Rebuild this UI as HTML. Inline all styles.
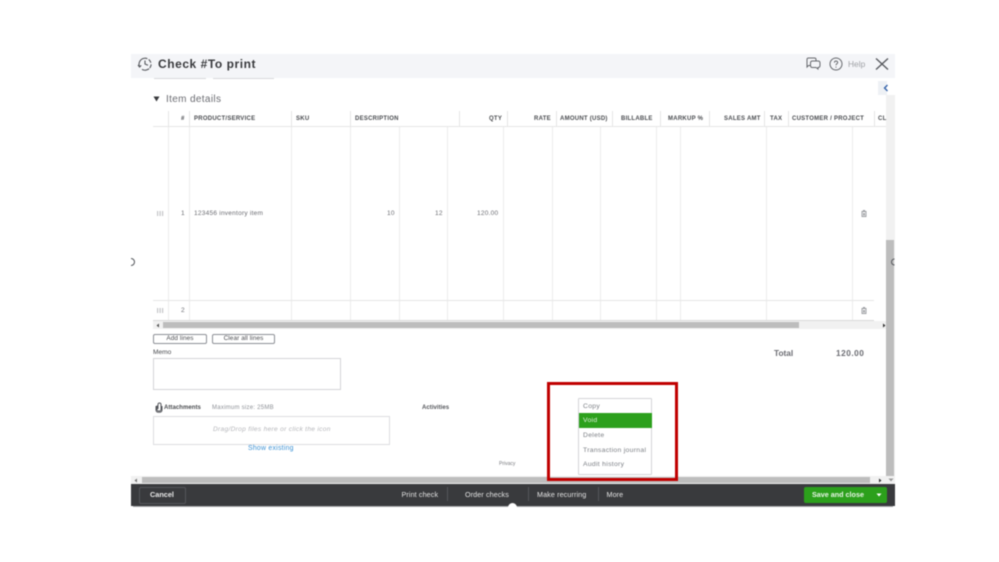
<!DOCTYPE html>
<html><head><meta charset="utf-8"><style>
html,body{margin:0;padding:0;background:#fff}
#p{position:relative;width:999px;height:562px;overflow:hidden;background:#fff;font-family:"Liberation Sans",sans-serif;filter:blur(.5px)}
#p div,#p span.t{position:absolute}
.t{white-space:nowrap;line-height:10px}
.h{font-size:6px;font-weight:bold;color:#4a4c50;top:113.5px;letter-spacing:.25px}
.v{width:1px;background:#ededed}
.vh{width:1px;background:#e6e6e6;top:111px;height:15px}
.c{font-size:6.5px;color:#6b6c72;line-height:10px;white-space:nowrap;letter-spacing:.25px}
.m{font-size:6.8px;color:#7d8086;left:583px;letter-spacing:.3px}
.f{font-size:7.2px;color:#e4e4e4;top:489.5px;letter-spacing:.1px}
.sep{width:1px;background:#55565a;top:487px;height:14px}
.btn{border:1px solid #8d9096;border-radius:2px;background:#fff;box-sizing:border-box;text-align:center;font-size:6.4px;line-height:8px;color:#4a4c50;letter-spacing:.1px}
</style></head><body><div id="p">

<!-- header -->
<div style="left:131px;top:54px;width:764px;height:24px;background:#f4f5f8"></div>
<svg style="position:absolute;left:137px;top:56px" width="16" height="16" viewBox="0 0 16 16" fill="none" stroke="#55575c" stroke-width="1.1"><path d="M2.5 10.5A6 6 0 1 1 5 13.4" stroke-dasharray="14 1.5 4 1.5 4 1"/><path d="M8 4.5V8l3 1.3"/><path d="M1 9l1.6 2L4.2 9.4"/></svg>
<div class="t" style="left:158px;top:57px;font-size:12px;line-height:14px;font-weight:bold;color:#393a3d;letter-spacing:.55px">Check #To print</div>
<div style="left:154px;top:78px;width:52px;height:1px;background:#d8d9dc"></div>
<div style="left:213px;top:78px;width:61px;height:1px;background:#d8d9dc"></div>

<svg style="position:absolute;left:805px;top:56px" width="17" height="15" viewBox="0 0 17 15" fill="none" stroke="#66686d" stroke-width="1"><path d="M5 9.5H3.5L2 11V3.5Q2 2 3.5 2H9.5Q11 2 11 3.5V4.5"/><path d="M7.5 5H13Q15 5 15 7V9.5Q15 11.5 13 11.5V13L11 11.5H7.5Q5.500 11.5 5.500 9.500V7Q5.500 5 7.500 5Z"/></svg>
<svg style="position:absolute;left:829px;top:57px" width="14" height="14" viewBox="0 0 14 14" fill="none" stroke="#66686d" stroke-width="1"><circle cx="7" cy="7" r="6"/><path d="M5.4 5.6Q5.5 4 7 4T8.7 5.5C8.7 6.7 7 6.8 7 8.2"/><path d="M7 9.6v1"/></svg>
<div class="t" style="left:848px;top:59px;font-size:8.4px;color:#a0a2a6">Help</div>
<svg style="position:absolute;left:875px;top:57px" width="14" height="14" viewBox="0 0 14 14" fill="none" stroke="#55575c" stroke-width="1.3"><path d="M1 1.5L13 12.5M13 1.5L1 12.5"/></svg>

<!-- collapse tab -->
<div style="left:878px;top:81px;width:9px;height:14px;background:#eef1f5"></div>
<svg style="position:absolute;left:883px;top:84px" width="6" height="8" viewBox="0 0 6 8" fill="none" stroke="#2f5fa8" stroke-width="1.3"><path d="M4.5 1L1.5 4l3 3"/></svg>

<!-- right scrollbar -->
<div style="left:886px;top:95px;width:9px;height:381px;background:#f1f1f1"></div>
<div style="left:886px;top:240px;width:8px;height:236px;background:#bdbdbd"></div>

<!-- section -->
<svg style="position:absolute;left:153px;top:96px" width="7" height="6"><path d="M0.5 0.5H6.5L3.5 5.5Z" fill="#393a3d"/></svg>
<div class="t" style="left:166px;top:93.500px;font-size:10px;line-height:12px;color:#6b6c72;letter-spacing:.35px">Item details</div>

<!-- table header -->
<div class="vh" style="left:168px"></div><div class="vh" style="left:189px"></div><div class="vh" style="left:291px"></div><div class="vh" style="left:350px"></div><div class="vh" style="left:459px"></div><div class="vh" style="left:507px"></div><div class="vh" style="left:556px"></div><div class="vh" style="left:612px"></div><div class="vh" style="left:660px"></div><div class="vh" style="left:709px"></div><div class="vh" style="left:764px"></div><div class="vh" style="left:788px"></div><div class="vh" style="left:874px"></div>
<span class="t h" style="left:181px">#</span>
<span class="t h" style="left:194px">PRODUCT/SERVICE</span>
<span class="t h" style="left:296px">SKU</span>
<span class="t h" style="left:355px">DESCRIPTION</span>
<span class="t h" style="left:489px">QTY</span>
<span class="t h" style="left:534px">RATE</span>
<span class="t h" style="left:560px">AMOUNT (USD)</span>
<span class="t h" style="left:621px">BILLABLE</span>
<span class="t h" style="left:668px">MARKUP %</span>
<span class="t h" style="left:724px">SALES AMT</span>
<span class="t h" style="left:770px">TAX</span>
<span class="t h" style="left:792px">CUSTOMER / PROJECT</span>
<span class="t h" style="left:878px">CL</span>
<div style="left:153px;top:126px;width:733px;height:1px;background:#e6e6e6"></div>

<!-- body lines -->
<div class="v" style="left:168px;top:127px;height:193px"></div><div class="v" style="left:189px;top:127px;height:193px"></div><div class="v" style="left:291px;top:127px;height:193px"></div><div class="v" style="left:350px;top:127px;height:193px"></div><div class="v" style="left:399px;top:127px;height:193px"></div><div class="v" style="left:447px;top:127px;height:193px"></div><div class="v" style="left:503px;top:127px;height:193px"></div><div class="v" style="left:552px;top:127px;height:193px"></div><div class="v" style="left:600px;top:127px;height:193px"></div><div class="v" style="left:656px;top:127px;height:193px"></div><div class="v" style="left:680px;top:127px;height:193px"></div><div class="v" style="left:766px;top:127px;height:193px"></div><div class="v" style="left:852px;top:127px;height:193px"></div>
<div style="left:153px;top:300px;width:721px;height:1px;background:#e6e6e6"></div>
<div style="left:153px;top:320px;width:721px;height:1px;background:#d9d9d9"></div>

<!-- row 1 -->
<svg style="position:absolute;left:157px;top:211px" width="7" height="5" fill="#c4c5c8"><rect width="1.2" height="5"/><rect x="2.5" width="1.2" height="5"/><rect x="5" width="1.2" height="5"/></svg>
<div class="c" style="left:181px;top:209px">1</div>
<div class="c" style="left:194px;top:209px">123456 inventory item</div>
<div class="c" style="left:387px;top:209px">10</div>
<div class="c" style="left:435px;top:209px">12</div>
<div class="c" style="left:477px;top:209px">120.00</div>
<svg style="position:absolute;left:861px;top:210px" width="6" height="7" fill="none" stroke="#9a9ca0" stroke-width=".9"><path d="M.5 1.5h5M1 1.5v5h4v-5M2 .5h2M2.500 3v2.500M3.500 3v2.500"/></svg>

<!-- row 2 -->
<svg style="position:absolute;left:157px;top:308px" width="7" height="5" fill="#c4c5c8"><rect width="1.2" height="5"/><rect x="2.5" width="1.2" height="5"/><rect x="5" width="1.2" height="5"/></svg>
<div class="c" style="left:181px;top:305.500px">2</div>
<svg style="position:absolute;left:861px;top:307px" width="6" height="7" fill="none" stroke="#9a9ca0" stroke-width=".9"><path d="M.5 1.5h5M1 1.5v5h4v-5M2 .5h2M2.500 3v2.500M3.500 3v2.500"/></svg>

<!-- table h scrollbar -->
<div style="left:153px;top:321px;width:733px;height:8px;background:#f1f1f1"></div>
<div style="left:163px;top:322px;width:636px;height:6px;background:#bdbdbd"></div>
<svg style="position:absolute;left:156px;top:323px" width="4" height="5"><path d="M3 .5V4.500L.5 2.500Z" fill="#555"/></svg>
<svg style="position:absolute;left:882px;top:323px" width="4" height="5"><path d="M1 .5V4.500L3.500 2.500Z" fill="#333"/></svg>

<!-- buttons -->
<div class="btn" style="left:153px;top:334px;width:54px;height:10px">Add lines</div>
<div class="btn" style="left:212px;top:334px;width:63px;height:10px">Clear all lines</div>

<!-- memo -->
<div class="t" style="left:153px;top:347.500px;font-size:6.600px;color:#4a4c50">Memo</div>
<div style="left:153px;top:358px;width:186px;height:30px;border:1px solid #d4d5d8"></div>

<!-- total -->
<div class="t" style="left:774px;top:348px;font-size:8.300px;font-weight:bold;color:#6b6c72">Total</div>
<div class="t" style="left:836px;top:348px;font-size:8.300px;font-weight:bold;color:#6b6c72;letter-spacing:.5px">120.00</div>

<!-- attachments -->
<svg style="position:absolute;left:155px;top:402px" width="8" height="11" fill="none" stroke="#55575c" stroke-width="1"><path d="M2 3.500V7.500Q2 9 4 9T6 7.500V2.500Q6 1 4.500 1T3 2.500V7"/><path d="M1 4V8Q1 10.300 4 10.300T7 8V4"/></svg>
<div class="t" style="left:164px;top:403px;font-size:6px;font-weight:bold;color:#4a4c50;letter-spacing:.05px">Attachments</div>
<div class="t" style="left:212px;top:403px;font-size:6px;color:#8d9096;letter-spacing:.25px">Maximum size: 25MB</div>
<div class="t" style="left:422px;top:402.500px;font-size:6px;font-weight:bold;color:#55575c;letter-spacing:.05px">Activities</div>
<div style="left:153px;top:416px;width:235px;height:27px;border:1px solid #dcdde0"></div>
<div class="t" style="left:213px;top:425px;font-size:6.600px;font-style:italic;color:#b5b6ba;letter-spacing:.3px">Drag/Drop files here or click the icon</div>
<div class="t" style="left:248px;top:443.500px;font-size:6.900px;color:#3d92d4;letter-spacing:.25px">Show existing</div>
<div class="t" style="left:499px;top:459px;font-size:5px;color:#77797e">Privacy</div>

<!-- bottom scrollbar -->
<div style="left:131px;top:476px;width:764px;height:8px;background:#f1f1f1"></div>
<div style="left:142px;top:477px;width:728px;height:6px;background:#bdbdbd"></div>
<svg style="position:absolute;left:134px;top:478px" width="4" height="5"><path d="M3 .5V4.500L.5 2.500Z" fill="#777"/></svg>
<svg style="position:absolute;left:878px;top:478px" width="4" height="5"><path d="M1 .5V4.500L3.500 2.500Z" fill="#333"/></svg>
<svg style="position:absolute;left:888px;top:478px" width="6" height="4"><path d="M.5 .5H5.500L3 3.500Z" fill="#999"/></svg>

<!-- footer -->
<div style="left:131px;top:484px;width:764px;height:22px;background:#393a3d"></div>
<div style="left:133px;top:506px;width:760px;height:1px;background:#a8a9ab"></div>
<div style="left:139px;top:487px;width:45px;height:15px;border:1px solid #55565a;border-radius:2px"></div>
<div class="t" style="left:150px;top:490px;font-size:7.300px;font-weight:bold;color:#e8e8e8">Cancel</div>
<span class="t f" style="left:401.500px">Print check</span>
<div class="sep" style="left:447px"></div>
<span class="t f" style="left:465px">Order checks</span>
<div class="sep" style="left:528px"></div>
<span class="t f" style="left:537px">Make recurring</span>
<div class="sep" style="left:598px"></div>
<span class="t f" style="left:606.500px">More</span>
<div style="left:508px;top:503px;width:9px;height:9px;border-radius:50%;background:#fff"></div>
<div style="left:804px;top:487px;width:83px;height:16px;background:#2ca01c;border-radius:2px"></div>
<div class="t" style="left:812px;top:490px;font-size:7.200px;font-weight:bold;color:#e8f5e6">Save and close</div>
<svg style="position:absolute;left:876px;top:493px" width="6" height="4"><path d="M.5 .5H5.500L3 3.500Z" fill="#fff"/></svg>

<!-- page-edge spinner marks -->
<svg style="position:absolute;left:129px;top:257px" width="7" height="10" fill="none" stroke="#55575c" stroke-width="1"><path d="M2 1.500A3.500 3.500 0 0 1 2 8.500"/></svg>
<svg style="position:absolute;left:890px;top:258px" width="5" height="8" fill="none" stroke="#55575c" stroke-width="1"><path d="M4.500 1A3 3 0 0 0 4.500 7"/></svg>

<!-- red rectangle -->
<div style="left:547px;top:382px;width:131px;height:99px;box-sizing:border-box;border:3px solid #c00000"></div>

<!-- menu -->
<div style="left:578px;top:398px;width:74px;height:77px;box-sizing:border-box;border:1px solid #d4d5d8;background:#fff;border-radius:1px"></div>
<div style="left:579px;top:413px;width:73px;height:15px;background:#2ca01c"></div>
<span class="t m" style="top:401.500px">Copy</span>
<span class="t m" style="top:416px;color:#dff0dc">Void</span>
<span class="t m" style="top:431px">Delete</span>
<span class="t m" style="top:445.500px">Transaction journal</span>
<span class="t m" style="top:460px">Audit history</span>

</div></body></html>
